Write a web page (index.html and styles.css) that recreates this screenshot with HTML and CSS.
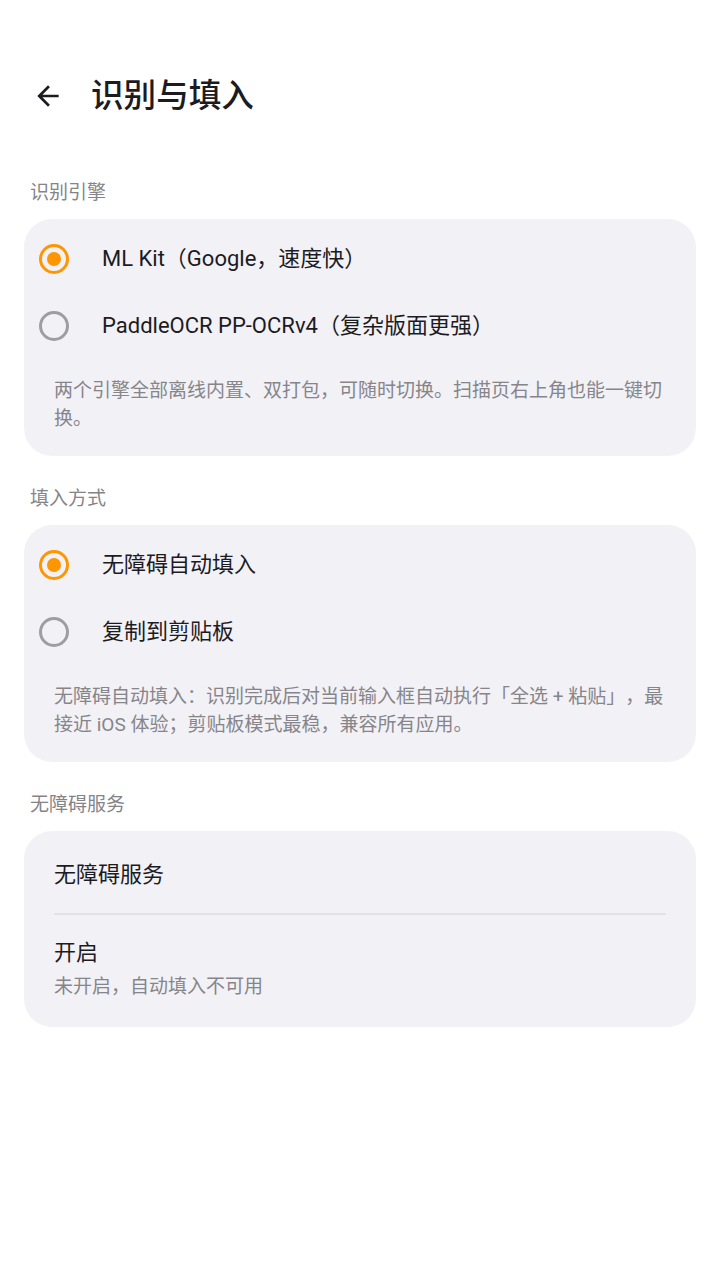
FILE: index.html
```html
<!DOCTYPE html>
<html lang="zh">
<head>
<meta charset="utf-8">
<link rel="stylesheet" href="styles.css">
</head>
<body>
<div class="page">
  <header class="topbar">
    <svg class="back" viewBox="0 0 24 24" width="32" height="32"><path d="M20 11H7.83l5.59-5.59L12 4l-8 8 8 8 1.41-1.41L7.83 13H20v-2z" fill="#1c1b1f"/></svg>
    <h1 class="title">识别与填入</h1>
  </header>

  <div class="section-label first">识别引擎</div>
  <section class="card radio-card">
    <div class="radio-row">
      <span class="radio on"></span>
      <span class="radio-text">ML Kit（Google，速度快）</span>
    </div>
    <div class="radio-row">
      <span class="radio"></span>
      <span class="radio-text">PaddleOCR PP-OCRv4（复杂版面更强）</span>
    </div>
    <p class="desc">两个引擎全部离线内置、双打包，可随时切换。扫描页右上角也能一键切换。</p>
  </section>

  <div class="section-label">填入方式</div>
  <section class="card radio-card">
    <div class="radio-row">
      <span class="radio on"></span>
      <span class="radio-text">无障碍自动填入</span>
    </div>
    <div class="radio-row">
      <span class="radio"></span>
      <span class="radio-text">复制到剪贴板</span>
    </div>
    <p class="desc">无障碍自动填入：识别完成后对当前输入框自动执行「全选 + 粘贴」，最接近 iOS 体验；剪贴板模式最稳，兼容所有应用。</p>
  </section>

  <div class="section-label">无障碍服务</div>
  <section class="card list-card">
    <div class="list-row head-row">无障碍服务</div>
    <div class="divider"></div>
    <div class="list-row sub-row">
      <div class="row-title">开启</div>
      <div class="row-sub">未开启，自动填入不可用</div>
    </div>
  </section>
</div>
</body>
</html>
```

FILE: styles.css
```css
* { box-sizing: border-box; }
html, body {
  margin: 0;
  padding: 0;
  background: #ffffff;
}
body {
  font-family: Roboto, "Noto Sans CJK SC", sans-serif;
  color: #1c1b1f;
  width: 720px;
  height: 1280px;
  text-spacing-trim: space-all;
}
.page {
  padding: 0 24px;
}
.topbar {
  display: flex;
  align-items: center;
  height: 80px;
  margin-top: 56px;
}
.back {
  margin-left: 8px;
  flex: none;
}
.title {
  margin: 0 0 0 27px;
  font-size: 32.6px;
  font-weight: 500;
  line-height: 40px;
  color: #1c1b1f;
}
.section-label {
  font-size: 19px;
  line-height: 26px;
  color: #858489;
  padding-left: 6px;
  margin: 30px 0 13px;
}
.section-label.first {
  margin-top: 44px;
}
.card {
  background: #f2f1f6;
  border-radius: 28px;
}
.radio-card {
  padding: 6px 30px 23px 15px;
}
.radio-row {
  display: flex;
  align-items: center;
  height: 67px;
}
.radio {
  width: 30px;
  height: 30px;
  border-radius: 50%;
  border: 3px solid #9e9da2;
  flex: none;
  position: relative;
}
.radio.on {
  border-color: #ff9500;
}
.radio.on::after {
  content: "";
  position: absolute;
  left: 5px;
  top: 5px;
  width: 14px;
  height: 14px;
  border-radius: 50%;
  background: #ff9500;
}
.radio-text {
  margin-left: 33px;
  font-size: 22px;
  line-height: 30px;
  color: #1c1b1f;
}
.desc {
  margin: 18px 0 0 15px;
  font-size: 19px;
  line-height: 28px;
  color: #86858a;
}
.list-card {
  padding: 0 30px;
}
.list-row.head-row {
  font-size: 22px;
  line-height: 30px;
  padding: 29px 0 23px;
}
.divider {
  height: 2px;
  background: #e3e2e7;
}
.sub-row {
  padding: 23px 0 27px;
}
.row-title {
  font-size: 22px;
  line-height: 30px;
}
.row-sub {
  margin-top: 6px;
  font-size: 19px;
  line-height: 26px;
  color: #86858a;
}
```
